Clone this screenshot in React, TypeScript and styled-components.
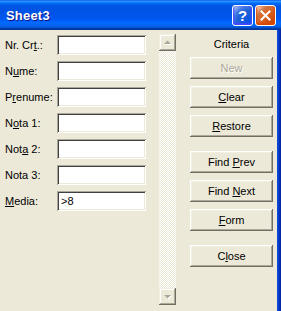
import React from 'react';
import styled, { createGlobalStyle } from 'styled-components';

const Global = createGlobalStyle`
  html, body { margin: 0; padding: 0; background: #ECE9D8; overflow: hidden; }
  body { font-family: "Liberation Sans", Arial, sans-serif; }
`;

const Window = styled.div`
  width: 281px;
  height: 311px;
  display: flex;
  flex-direction: column;
  overflow: hidden;
`;

const TitleBar = styled.div`
  height: 30px;
  flex: none;
  box-sizing: border-box;
  display: flex;
  align-items: center;
  justify-content: space-between;
  padding: 0 5px 0 6px;
  background: linear-gradient(
    180deg,
    #0058ee 0%,
    #3593ff 4%,
    #288eff 6%,
    #127dff 8%,
    #036ffc 10%,
    #0262ee 14%,
    #0057e5 20%,
    #0054e3 24%,
    #0055eb 56%,
    #005bf5 66%,
    #026afe 76%,
    #0062ef 86%,
    #0052d6 92%,
    #0040ab 94%,
    #003092 100%
  );
`;

const Title = styled.span`
  color: #fff;
  font: bold 13px "Liberation Sans", Arial, sans-serif;
  letter-spacing: 0.2px;
  text-shadow: 1px 1px #0f1089;
`;

const Controls = styled.div`
  display: flex;
  gap: 2px;
`;

const CapButton = styled.div<{ $kind: 'help' | 'close' }>`
  width: 21px;
  height: 21px;
  box-sizing: border-box;
  border: 1px solid #fff;
  border-radius: 3px;
  display: flex;
  align-items: center;
  justify-content: center;
  color: #fff;
  font: bold 15px "Liberation Sans", Arial, sans-serif;
  background: ${(p) =>
    p.$kind === 'close'
      ? 'radial-gradient(circle at 90% 90%, #cc4600 0, #dc6527 55%, #cd7546 70%, #ffccb2 90%, #fff 100%)'
      : 'radial-gradient(circle at 90% 90%, #0054e9 0, #2263d5 55%, #4479e4 70%, #a3bbec 90%, #fff 100%)'};
  box-shadow: ${(p) =>
    p.$kind === 'close' ? 'inset 0 -1px 2px 1px #da4600' : 'inset 0 -1px 2px 1px #4646ff'};
`;

const Body = styled.div`
  flex: 1;
  display: flex;
  min-height: 0;
`;

const Content = styled.div`
  flex: 1;
  display: flex;
  align-items: flex-start;
  padding: 5px 0 0 5px;
  background: #ece9d8;
`;

const FrameEdge = styled.div`
  width: 4px;
  flex: none;
  background: linear-gradient(90deg, #0a4ddf 0, #0746d6 1px, #0639c4 2px, #0428a8 3px);
`;

const Fields = styled.div`
  display: grid;
  grid-template-columns: 52px 89px;
  grid-auto-rows: 20px;
  row-gap: 6px;
  align-items: center;
`;

const Label = styled.label`
  font-size: 11px;
  color: #000;
  white-space: nowrap;
`;

const Key = styled.span`
  text-decoration: underline;
  text-underline-offset: 1px;
`;

const Input = styled.div`
  height: 20px;
  box-sizing: border-box;
  background: #fff;
  padding: 0 4px;
  font-size: 11px;
  line-height: 20px;
  color: #000;
  box-shadow: inset 1px 1px #aca899, inset -1px -1px #fff, inset 2px 2px #404040,
    inset -2px -2px #ece9d8;
`;

const ScrollBar = styled.div`
  margin-left: 13px;
  margin-top: -1px;
  width: 17px;
  height: 271px;
  display: flex;
  flex-direction: column;
  background-color: #fff;
  background-image: conic-gradient(#fff 25%, #ece9d8 0 50%, #fff 0 75%, #ece9d8 0);
  background-size: 2px 2px;
`;

const ScrollTrack = styled.div`
  flex: 1;
`;

const ScrollButton = styled.div`
  width: 17px;
  height: 17px;
  flex: none;
  box-sizing: border-box;
  background: #ece9d8;
  display: flex;
  align-items: center;
  justify-content: center;
  box-shadow: inset -1px -1px #716f64, inset 1px 1px #f1efe2, inset -2px -2px #aca899,
    inset 2px 2px #fff;
`;

const RightColumn = styled.div`
  margin-left: 14px;
  width: 83px;
  display: flex;
  flex-direction: column;
`;

const Caption = styled.div`
  height: 22px;
  line-height: 18px;
  text-align: center;
  font-size: 11px;
  color: #000;
`;

const Groups = styled.div`
  display: flex;
  flex-direction: column;
  gap: 14px;
`;

const Group = styled.div`
  display: flex;
  flex-direction: column;
  gap: 7px;
`;

const Button = styled.div<{ $disabled?: boolean }>`
  height: 22px;
  box-sizing: border-box;
  background: #ece9d8;
  display: flex;
  align-items: center;
  justify-content: center;
  font-size: 11px;
  color: ${(p) => (p.$disabled ? '#aca899' : '#000')};
  text-shadow: ${(p) => (p.$disabled ? '1px 1px #fff' : 'none')};
  box-shadow: inset -1px -1px #716f64, inset 1px 1px #fff, inset -2px -2px #aca899,
    inset 2px 2px #f1efe2;
`;

const Arrow: React.FC<{ down?: boolean }> = ({ down }) => (
  <svg width="9" height="6" viewBox="0 0 9 6">
    {down ? (
      <>
        <polygon points="2,2 9,2 5.5,5.5" fill="#fff" />
        <polygon points="1,1 8,1 4.5,4.5" fill="#aca899" />
      </>
    ) : (
      <>
        <polygon points="2,5 9,5 5.5,1.5" fill="#fff" />
        <polygon points="1,4 8,4 4.5,0.5" fill="#aca899" />
      </>
    )}
  </svg>
);

const CloseIcon = () => (
  <svg width="11" height="11" viewBox="0 0 11 11">
    <path d="M1.5 1.5 L9.5 9.5 M9.5 1.5 L1.5 9.5" stroke="#fff" strokeWidth="2" strokeLinecap="square" />
  </svg>
);

type Field = { pre: string; key: string; post: string; value?: string };

const fields: Field[] = [
  { pre: 'Nr. Cr', key: 't', post: '.:' },
  { pre: 'N', key: 'u', post: 'me:' },
  { pre: 'P', key: 'r', post: 'enume:' },
  { pre: 'N', key: 'o', post: 'ta 1:' },
  { pre: 'Not', key: 'a', post: ' 2:' },
  { pre: 'Nota 3:', key: '', post: '' },
  { pre: '', key: 'M', post: 'edia:', value: '>8' },
];

type Btn = { pre: string; key: string; post: string; disabled?: boolean };

const groups: Btn[][] = [
  [
    { pre: 'New', key: '', post: '', disabled: true },
    { pre: '', key: 'C', post: 'lear' },
    { pre: '', key: 'R', post: 'estore' },
  ],
  [
    { pre: 'Find ', key: 'P', post: 'rev' },
    { pre: 'Find ', key: 'N', post: 'ext' },
    { pre: '', key: 'F', post: 'orm' },
  ],
  [{ pre: 'C', key: 'l', post: 'ose' }],
];

export default function App() {
  return (
    <>
      <Global />
      <Window>
        <TitleBar>
          <Title>Sheet3</Title>
          <Controls>
            <CapButton $kind="help">?</CapButton>
            <CapButton $kind="close">
              <CloseIcon />
            </CapButton>
          </Controls>
        </TitleBar>
        <Body>
          <Content>
            <Fields>
              {fields.map((f, i) => (
                <React.Fragment key={i}>
                  <Label>
                    {f.pre}
                    {f.key && <Key>{f.key}</Key>}
                    {f.post}
                  </Label>
                  <Input>{f.value ?? ''}</Input>
                </React.Fragment>
              ))}
            </Fields>
            <ScrollBar>
              <ScrollButton>
                <Arrow />
              </ScrollButton>
              <ScrollTrack />
              <ScrollButton>
                <Arrow down />
              </ScrollButton>
            </ScrollBar>
            <RightColumn>
              <Caption>Criteria</Caption>
              <Groups>
                {groups.map((g, gi) => (
                  <Group key={gi}>
                    {g.map((b, bi) => (
                      <Button key={bi} $disabled={b.disabled}>
                        <span>
                          {b.pre}
                          {b.key && <Key>{b.key}</Key>}
                          {b.post}
                        </span>
                      </Button>
                    ))}
                  </Group>
                ))}
              </Groups>
            </RightColumn>
          </Content>
          <FrameEdge />
        </Body>
      </Window>
    </>
  );
}
